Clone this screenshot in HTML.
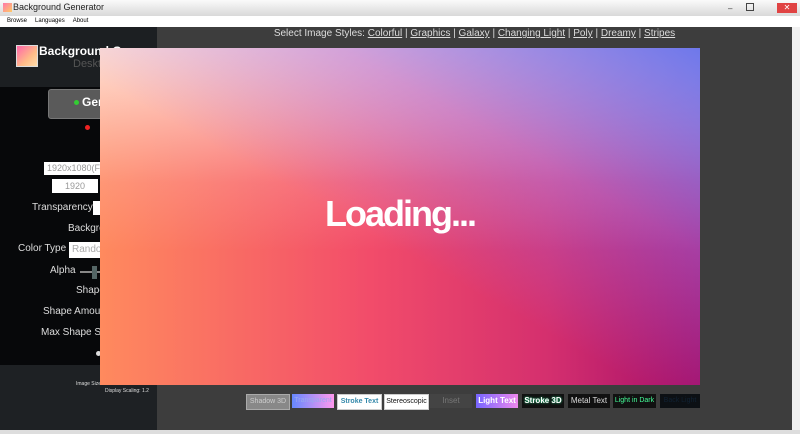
<!DOCTYPE html><html><head><style>
body{margin:0;width:800px;height:434px;overflow:hidden;font-family:"Liberation Sans",sans-serif;background:#f0f0f0;position:relative}
.a{position:absolute}
</style></head><body>
<div class="a" style="left:0;top:0;width:800px;height:16px;background:linear-gradient(#fafafa,#d9d9d9)"></div>
<div class="a" style="left:3px;top:3px;width:9px;height:9px;background:linear-gradient(135deg,#f7a,#fc6)"></div>
<div class="a" style="left:13px;top:2px;font-size:9px;color:#222">Background Generator</div>
<div class="a" style="left:728px;top:4px;font-size:8px;color:#333">–</div>
<div class="a" style="left:746px;top:3px;width:6px;height:6px;border:1px solid #444"></div>
<div class="a" style="left:777px;top:3px;width:20px;height:10px;background:#e04343;color:#fff;font-size:8px;text-align:center;line-height:10px">✕</div>
<div class="a" style="left:0;top:16px;width:800px;height:11px;background:#fff;font-size:6px;line-height:11px;color:#000"><span style="margin-left:7px">Browse</span><span style="margin-left:8px">Languages</span><span style="margin-left:8px">About</span></div>
<div class="a" style="left:0;top:27px;width:157px;height:403px;background:#07080a"></div>
<div class="a" style="left:0;top:27px;width:157px;height:60px;background:#1c1f22"></div>
<div class="a" style="left:0;top:365px;width:157px;height:65px;background:#1e2124"></div>
<div class="a" style="left:16px;top:45px;width:20px;height:20px;background:linear-gradient(135deg,#f6a,#fb8 60%,#fda);border:1px solid #ddd"></div>
<div class="a" style="left:39px;top:44px;font-size:12px;font-weight:bold;color:#fff">Background G</div>
<div class="a" style="left:73px;top:58px;font-size:11px;color:#555">Deskto</div>
<div class="a" style="left:48px;top:89px;width:60px;height:28px;background:#5a5a5a;border-radius:3px;border:1px solid #777"></div>
<div class="a" style="left:74px;top:100px;width:5px;height:5px;border-radius:50%;background:#3c3"></div>
<div class="a" style="left:82px;top:95px;font-size:12px;font-weight:bold;color:#fff">Gen</div>
<div class="a" style="left:85px;top:125px;width:5px;height:5px;border-radius:50%;background:#e22"></div>
<div class="a" style="left:44px;top:162px;width:56px;height:13px;background:#fff;font-size:9px;color:#999;line-height:13px;padding-left:3px">1920x1080(F</div>
<div class="a" style="left:52px;top:179px;width:46px;height:14px;background:#fff;font-size:9px;color:#999;line-height:14px;text-align:center">1920</div>
<div class="a" style="left:32px;top:202px;font-size:10px;color:#ddd">Transparency</div>
<div class="a" style="left:93px;top:201px;width:7px;height:14px;background:#fff"></div>
<div class="a" style="left:68px;top:223px;font-size:10px;color:#ddd">Backgro</div>
<div class="a" style="left:18px;top:243px;font-size:10px;color:#ddd">Color Type</div>
<div class="a" style="left:69px;top:242px;width:31px;height:16px;background:#fff;font-size:10px;color:#aaa;line-height:16px;padding-left:3px">Rando</div>
<div class="a" style="left:50px;top:265px;font-size:10px;color:#ddd">Alpha</div>
<div class="a" style="left:80px;top:271px;width:20px;height:2px;background:#888"></div>
<div class="a" style="left:92px;top:266px;width:5px;height:13px;background:#566"></div>
<div class="a" style="left:76px;top:285px;font-size:10px;color:#ddd">Shape</div>
<div class="a" style="left:43px;top:306px;font-size:10px;color:#ddd">Shape Amour</div>
<div class="a" style="left:41px;top:327px;font-size:10px;color:#ddd">Max Shape Siz</div>
<div class="a" style="left:96px;top:351px;width:5px;height:5px;border-radius:50%;background:#ddd"></div>
<div class="a" style="left:76px;top:381px;font-size:5px;color:#ddd">Image Size: 1920 x 1080</div>
<div class="a" style="left:105px;top:388px;font-size:5px;color:#ddd">Display Scaling: 1.2</div>
<div class="a" style="left:157px;top:27px;width:635px;height:403px;background:#3d3d3d"></div>
<div class="a" style="left:792px;top:27px;width:8px;height:403px;background:#f0f0f0"></div>
<div class="a" style="left:0;top:430px;width:800px;height:4px;background:#ddd"></div>
<div class="a" style="left:157px;top:28px;width:635px;text-align:center;font-size:10px;color:#ddd">Select Image Styles: <u>Colorful</u> | <u>Graphics</u> | <u>Galaxy</u> | <u>Changing Light</u> | <u>Poly</u> | <u>Dreamy</u> | <u>Stripes</u></div>
<div class="a" style="left:100px;top:48px;width:600px;height:337px;background:linear-gradient(to bottom,rgba(255,240,235,.85),rgba(255,200,210,.2) 40%,rgba(0,0,0,0) 60%),linear-gradient(to right,#ff8a5e,#f24c6a 45%,#d42f6e 75%,#a30e6a);"></div>
<div class="a" style="left:100px;top:48px;width:600px;height:337px;background:linear-gradient(to bottom left,rgba(110,120,235,1),rgba(170,110,220,.5) 30%,rgba(0,0,0,0) 55%)"></div>
<div class="a" style="left:100px;top:193px;width:600px;text-align:center;font-size:36px;font-weight:bold;color:#fff;letter-spacing:-2px">Loading...</div>
<div class="a" style="left:246px;top:394px;width:42px;height:14px;background:#888;border:1px solid #aaa;font-size:7px;color:#ccc;text-align:center;line-height:14px">Shadow 3D</div>
<div class="a" style="left:292px;top:394px;width:42px;height:14px;background:linear-gradient(to right,#68f,#f9e);font-size:7px;color:#9ae;text-align:center;line-height:14px">Transparent</div>
<div class="a" style="left:337px;top:394px;width:43px;height:14px;background:#fff;border:1px solid #ccc;font-size:7px;font-weight:bold;color:#38a;text-align:center;line-height:14px">Stroke Text</div>
<div class="a" style="left:384px;top:394px;width:43px;height:14px;background:#fff;border:1px solid #ccc;font-size:7px;color:#111;text-align:center;line-height:14px">Stereoscopic</div>
<div class="a" style="left:430px;top:394px;width:42px;height:14px;background:#444;font-size:8px;color:#777;text-align:center;line-height:14px">Inset</div>
<div class="a" style="left:476px;top:394px;width:42px;height:14px;background:linear-gradient(to right,#76f,#e8e);font-size:8px;font-weight:bold;color:#fff;text-align:center;line-height:14px">Light Text</div>
<div class="a" style="left:522px;top:394px;width:42px;height:14px;background:#111;font-size:8px;font-weight:bold;color:#fff;text-shadow:0 0 2px #2d8;text-align:center;line-height:14px">Stroke 3D</div>
<div class="a" style="left:568px;top:394px;width:42px;height:14px;background:#111;font-size:8px;color:#ddd;text-align:center;line-height:14px">Metal Text</div>
<div class="a" style="left:613px;top:394px;width:43px;height:14px;background:#111;font-size:7px;color:#4f9;text-align:center;line-height:14px">Light in Dark</div>
<div class="a" style="left:660px;top:394px;width:40px;height:14px;background:#0c1014;font-size:7px;color:#123;text-align:center;line-height:14px">Back Light</div>
</body></html>
